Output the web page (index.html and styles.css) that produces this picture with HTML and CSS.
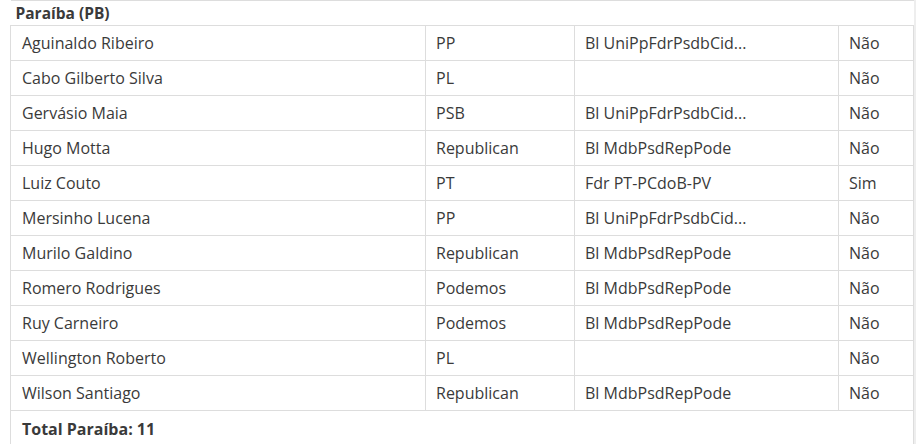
FILE: index.html
```html
<!DOCTYPE html>
<html lang="pt-BR">
<head>
<meta charset="utf-8">
<title>Paraíba (PB)</title>
<link rel="stylesheet" href="styles.css">
</head>
<body>
<div class="page">
  <table class="bancada">
    <colgroup>
      <col class="c-nome">
      <col class="c-partido">
      <col class="c-bloco">
      <col class="c-sit">
    </colgroup>
    <thead>
      <tr class="uf-row"><th colspan="4">Paraíba (PB)</th></tr>
    </thead>
    <tbody>
      <tr><td>Aguinaldo Ribeiro</td><td>PP</td><td>Bl UniPpFdrPsdbCid...</td><td>Não</td></tr>
      <tr><td>Cabo Gilberto Silva</td><td>PL</td><td></td><td>Não</td></tr>
      <tr><td>Gervásio Maia</td><td>PSB</td><td>Bl UniPpFdrPsdbCid...</td><td>Não</td></tr>
      <tr><td>Hugo Motta</td><td>Republican</td><td>Bl MdbPsdRepPode</td><td>Não</td></tr>
      <tr><td>Luiz Couto</td><td>PT</td><td>Fdr PT-PCdoB-PV</td><td>Sim</td></tr>
      <tr><td>Mersinho Lucena</td><td>PP</td><td>Bl UniPpFdrPsdbCid...</td><td>Não</td></tr>
      <tr><td>Murilo Galdino</td><td>Republican</td><td>Bl MdbPsdRepPode</td><td>Não</td></tr>
      <tr><td>Romero Rodrigues</td><td>Podemos</td><td>Bl MdbPsdRepPode</td><td>Não</td></tr>
      <tr><td>Ruy Carneiro</td><td>Podemos</td><td>Bl MdbPsdRepPode</td><td>Não</td></tr>
      <tr><td>Wellington Roberto</td><td>PL</td><td></td><td>Não</td></tr>
      <tr><td>Wilson Santiago</td><td>Republican</td><td>Bl MdbPsdRepPode</td><td>Não</td></tr>
    </tbody>
    <tfoot>
      <tr class="total-row"><th colspan="4">Total Paraíba: 11</th></tr>
    </tfoot>
  </table>
  <div class="edge"></div>
</div>
</body>
</html>
```

FILE: styles.css
```css
html, body {
  margin: 0;
  padding: 0;
  background: #ffffff;
}

body {
  font-family: "Open Sans", "Liberation Sans", sans-serif;
  color: #3a3a3a;
  overflow: hidden;
}

.page {
  display: flex;
  width: 916px;
  height: 444px;
  overflow: hidden;
}

.bancada {
  margin-left: 10px;
  width: 903px;
  border-collapse: collapse;
  table-layout: fixed;
  font-size: 16px;
  align-self: flex-start;
}

.c-nome { width: 415px; }
.c-partido { width: 149px; }
.c-bloco { width: 264px; }
.c-sit { width: 75px; }

.bancada td {
  border: 1px solid #dddddd;
  height: 34px;
  padding: 0 11px 0 10px;
  line-height: 22px;
  white-space: nowrap;
  overflow: hidden;
  vertical-align: middle;
  font-weight: 400;
}

.bancada td:first-child {
  padding-left: 11px;
}

.uf-row th {
  border-top: 1px solid #dddddd;
  border-bottom: 1px solid #dddddd;
  text-align: left;
  padding: 0 5px;
  height: 24px;
  font-size: 15.5px;
  font-weight: 700;
  line-height: 20px;
  vertical-align: middle;
}

.total-row th {
  border: 1px solid #dddddd;
  text-align: left;
  padding: 0 11px;
  height: 36px;
  font-size: 16px;
  font-weight: 700;
  vertical-align: middle;
}

.edge {
  margin-left: auto;
  width: 3px;
  background: #eeeeee;
}
```
